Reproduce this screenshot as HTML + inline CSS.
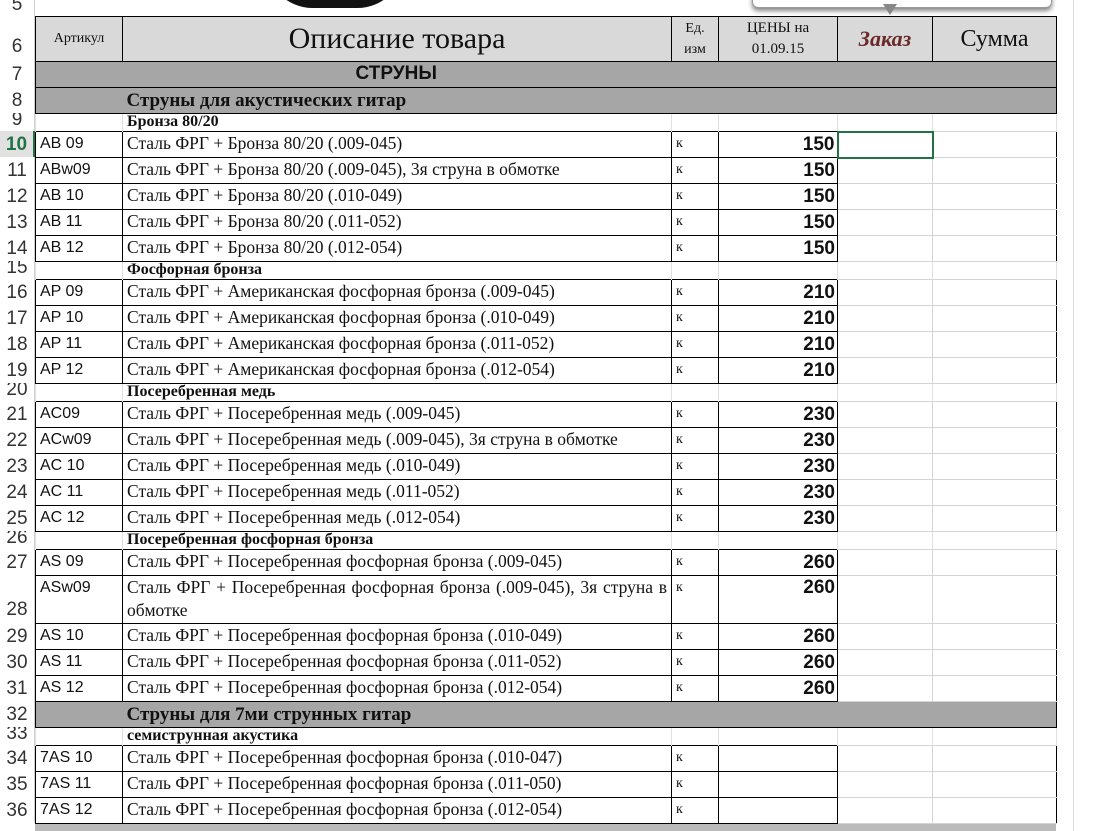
<!DOCTYPE html>
<html><head><meta charset="utf-8">
<style>
*{margin:0;padding:0;box-sizing:border-box}
body{width:1096px;height:831px;background:#fff;position:relative;overflow:hidden;font-family:"Liberation Serif",serif;color:#111}
.rn{position:absolute;left:0;width:35px;text-align:center;font-family:"Liberation Sans",sans-serif;font-size:19px;color:#333;border-right:1px solid #cfcfcf;overflow:hidden}
table{position:absolute;left:35px;top:16px;border-collapse:collapse;table-layout:fixed;width:1021px}
td{padding:0 4px;overflow:hidden;white-space:nowrap;vertical-align:top;font-size:17.5px;line-height:22px}
tr.d td{border:1px solid #000}
tr.d td.e{border:1px solid #d4d4d4;border-left:1px solid #000}
tr.d td.f{border:1px solid #d4d4d4;border-right:1px solid #000}
tr.s td{border-left:1px solid #e0e0e0;border-right:1px solid #e0e0e0;font-weight:bold;font-size:16px;line-height:16px}
tr.g td{background:#a6a6a6;border:1px solid #000;font-weight:bold;font-size:19px;line-height:24px}
.a{font-family:"Liberation Sans",sans-serif;font-size:16px;line-height:24px!important}
.p{font-family:"Liberation Sans",sans-serif;font-weight:bold;font-size:19px;text-align:right;padding-right:2px;line-height:24px!important;vertical-align:bottom!important}
.k{font-size:14px;line-height:24px!important}
tr.h td{background:#d9d9d9;border:1px solid #000;text-align:center;vertical-align:middle}
</style></head><body>
<div style="position:absolute;left:265px;top:-40px;width:140px;height:48px;border-radius:0 0 80px 80px;background:#111"></div>
<div style="position:absolute;left:752px;top:-12px;width:300px;height:20px;border-radius:6px;border:1px solid #999;box-shadow:0 3px 5px #888;background:#fff"></div>
<div style="position:absolute;left:883px;top:4px;width:0;height:0;border-left:7px solid transparent;border-right:7px solid transparent;border-top:11px solid #888"></div>
<div style="position:absolute;left:1073px;top:0;width:1px;height:831px;background:#ddd"></div>
<div style="position:absolute;left:35px;top:824px;width:1021px;height:7px;background:#bbb;z-index:2"></div>

<div class="rn" style="top:0;height:16px;line-height:10px">5</div>
<div class="rn" style="top:16px;height:45px;line-height:62px">6</div>
<div class="rn" style="top:61px;height:26px;line-height:28px">7</div>
<div class="rn" style="top:87px;height:26px;line-height:28px">8</div>
<div class="rn" style="top:113px;height:18px;line-height:14px">9</div>
<div class="rn" style="top:131px;height:26px;line-height:28px;color:#217346;font-weight:bold;background:#e1e1e1;border-right:2px solid #217346">10</div>
<div class="rn" style="top:157px;height:26px;line-height:28px">11</div>
<div class="rn" style="top:183px;height:26px;line-height:28px">12</div>
<div class="rn" style="top:209px;height:26px;line-height:28px">13</div>
<div class="rn" style="top:235px;height:26px;line-height:28px">14</div>
<div class="rn" style="top:261px;height:18px;line-height:14px">15</div>
<div class="rn" style="top:279px;height:26px;line-height:28px">16</div>
<div class="rn" style="top:305px;height:26px;line-height:28px">17</div>
<div class="rn" style="top:331px;height:26px;line-height:28px">18</div>
<div class="rn" style="top:357px;height:26px;line-height:28px">19</div>
<div class="rn" style="top:383px;height:18px;line-height:14px">20</div>
<div class="rn" style="top:401px;height:26px;line-height:28px">21</div>
<div class="rn" style="top:427px;height:26px;line-height:28px">22</div>
<div class="rn" style="top:453px;height:26px;line-height:28px">23</div>
<div class="rn" style="top:479px;height:26px;line-height:28px">24</div>
<div class="rn" style="top:505px;height:26px;line-height:28px">25</div>
<div class="rn" style="top:531px;height:18px;line-height:14px">26</div>
<div class="rn" style="top:549px;height:26px;line-height:28px">27</div>
<div class="rn" style="top:575px;height:48px;line-height:70px">28</div>
<div class="rn" style="top:623px;height:26px;line-height:28px">29</div>
<div class="rn" style="top:649px;height:26px;line-height:28px">30</div>
<div class="rn" style="top:675px;height:26px;line-height:28px">31</div>
<div class="rn" style="top:701px;height:26px;line-height:28px">32</div>
<div class="rn" style="top:727px;height:18px;line-height:14px">33</div>
<div class="rn" style="top:745px;height:26px;line-height:28px">34</div>
<div class="rn" style="top:771px;height:26px;line-height:28px">35</div>
<div class="rn" style="top:797px;height:26px;line-height:28px">36</div>

<table>
<colgroup><col style="width:87px"><col style="width:549px"><col style="width:47px"><col style="width:119px"><col style="width:95px"><col style="width:124px"></colgroup>
<tr class="h" style="height:45px">
<td style="font-size:14px">Артикул</td>
<td style="font-size:30px;line-height:32px">Описание товара</td>
<td style="font-size:14px;line-height:21px;padding:0">Ед.<br>изм</td>
<td style="font-size:15px;line-height:21px;white-space:normal">ЦЕНЫ на 01.09.15</td>
<td style="font-size:22px;font-weight:bold;font-style:italic;color:#6b2a2a">Заказ</td>
<td style="font-size:24px">Сумма</td></tr>
<tr class="g" style="height:26px"><td style="border-right:none"></td><td colspan="5" style="font-family:'Liberation Sans',sans-serif;font-size:19px;line-height:24px;border-left:none;padding-left:233px">СТРУНЫ</td></tr>
<tr class="g" style="height:26px"><td style="border-right:none"></td><td colspan="5" style="line-height:25px;border-left:none">Струны для акустических гитар</td></tr>
<tr class="s" style="height:18px"><td></td><td>Бронза 80/20</td><td></td><td></td><td></td><td></td></tr>
<tr class="d" style="height:26px"><td class="a">AB 09</td><td>Сталь ФРГ + Бронза 80/20 (.009-045)</td><td class="k">к</td><td class="p">150</td><td class="e" style="border:2px solid #217346"></td><td class="f"></td></tr>
<tr class="d" style="height:26px"><td class="a">ABw09</td><td>Сталь ФРГ + Бронза 80/20 (.009-045), 3я струна в обмотке</td><td class="k">к</td><td class="p">150</td><td class="e"></td><td class="f"></td></tr>
<tr class="d" style="height:26px"><td class="a">AB 10</td><td>Сталь ФРГ + Бронза 80/20 (.010-049)</td><td class="k">к</td><td class="p">150</td><td class="e"></td><td class="f"></td></tr>
<tr class="d" style="height:26px"><td class="a">AB 11</td><td>Сталь ФРГ + Бронза 80/20 (.011-052)</td><td class="k">к</td><td class="p">150</td><td class="e"></td><td class="f"></td></tr>
<tr class="d" style="height:26px"><td class="a">AB 12</td><td>Сталь ФРГ + Бронза 80/20 (.012-054)</td><td class="k">к</td><td class="p">150</td><td class="e"></td><td class="f"></td></tr>
<tr class="s" style="height:18px"><td></td><td>Фосфорная бронза</td><td></td><td></td><td></td><td></td></tr>
<tr class="d" style="height:26px"><td class="a">AP 09</td><td>Сталь ФРГ + Американская фосфорная бронза (.009-045)</td><td class="k">к</td><td class="p">210</td><td class="e"></td><td class="f"></td></tr>
<tr class="d" style="height:26px"><td class="a">AP 10</td><td>Сталь ФРГ + Американская фосфорная бронза (.010-049)</td><td class="k">к</td><td class="p">210</td><td class="e"></td><td class="f"></td></tr>
<tr class="d" style="height:26px"><td class="a">AP 11</td><td>Сталь ФРГ + Американская фосфорная бронза (.011-052)</td><td class="k">к</td><td class="p">210</td><td class="e"></td><td class="f"></td></tr>
<tr class="d" style="height:26px"><td class="a">AP 12</td><td>Сталь ФРГ + Американская фосфорная бронза (.012-054)</td><td class="k">к</td><td class="p">210</td><td class="e"></td><td class="f"></td></tr>
<tr class="s" style="height:18px"><td></td><td>Посеребренная медь</td><td></td><td></td><td></td><td></td></tr>
<tr class="d" style="height:26px"><td class="a">AC09</td><td>Сталь ФРГ + Посеребренная медь (.009-045)</td><td class="k">к</td><td class="p">230</td><td class="e"></td><td class="f"></td></tr>
<tr class="d" style="height:26px"><td class="a">ACw09</td><td>Сталь ФРГ + Посеребренная медь (.009-045), 3я струна в обмотке</td><td class="k">к</td><td class="p">230</td><td class="e"></td><td class="f"></td></tr>
<tr class="d" style="height:26px"><td class="a">AC 10</td><td>Сталь ФРГ + Посеребренная медь (.010-049)</td><td class="k">к</td><td class="p">230</td><td class="e"></td><td class="f"></td></tr>
<tr class="d" style="height:26px"><td class="a">AC 11</td><td>Сталь ФРГ + Посеребренная медь (.011-052)</td><td class="k">к</td><td class="p">230</td><td class="e"></td><td class="f"></td></tr>
<tr class="d" style="height:26px"><td class="a">AC 12</td><td>Сталь ФРГ + Посеребренная медь (.012-054)</td><td class="k">к</td><td class="p">230</td><td class="e"></td><td class="f"></td></tr>
<tr class="s" style="height:18px"><td></td><td>Посеребренная фосфорная бронза</td><td></td><td></td><td></td><td></td></tr>
<tr class="d" style="height:26px"><td class="a">AS 09</td><td>Сталь ФРГ + Посеребренная фосфорная бронза (.009-045)</td><td class="k">к</td><td class="p">260</td><td class="e"></td><td class="f"></td></tr>
<tr class="d" style="height:48px"><td class="a">ASw09</td><td style="white-space:normal;text-align:justify;line-height:23px">Сталь ФРГ + Посеребренная фосфорная бронза (.009-045), 3я струна в обмотке</td><td class="k">к</td><td class="p" style="vertical-align:top!important">260</td><td class="e"></td><td class="f"></td></tr>
<tr class="d" style="height:26px"><td class="a">AS 10</td><td>Сталь ФРГ + Посеребренная фосфорная бронза (.010-049)</td><td class="k">к</td><td class="p">260</td><td class="e"></td><td class="f"></td></tr>
<tr class="d" style="height:26px"><td class="a">AS 11</td><td>Сталь ФРГ + Посеребренная фосфорная бронза (.011-052)</td><td class="k">к</td><td class="p">260</td><td class="e"></td><td class="f"></td></tr>
<tr class="d" style="height:26px"><td class="a">AS 12</td><td>Сталь ФРГ + Посеребренная фосфорная бронза (.012-054)</td><td class="k">к</td><td class="p">260</td><td class="e"></td><td class="f"></td></tr>
<tr class="g" style="height:26px"><td style="border-right:none"></td><td colspan="5" style="line-height:25px;border-left:none">Струны для 7ми струнных гитар</td></tr>
<tr class="s" style="height:18px"><td></td><td>семиструнная акустика</td><td></td><td></td><td></td><td></td></tr>
<tr class="d" style="height:26px"><td class="a">7AS 10</td><td>Сталь ФРГ + Посеребренная фосфорная бронза (.010-047)</td><td class="k">к</td><td class="p"></td><td class="e"></td><td class="f"></td></tr>
<tr class="d" style="height:26px"><td class="a">7AS 11</td><td>Сталь ФРГ + Посеребренная фосфорная бронза (.011-050)</td><td class="k">к</td><td class="p"></td><td class="e"></td><td class="f"></td></tr>
<tr class="d" style="height:26px"><td class="a">7AS 12</td><td>Сталь ФРГ + Посеребренная фосфорная бронза (.012-054)</td><td class="k">к</td><td class="p"></td><td class="e"></td><td class="f"></td></tr>
</table>
</body></html>
